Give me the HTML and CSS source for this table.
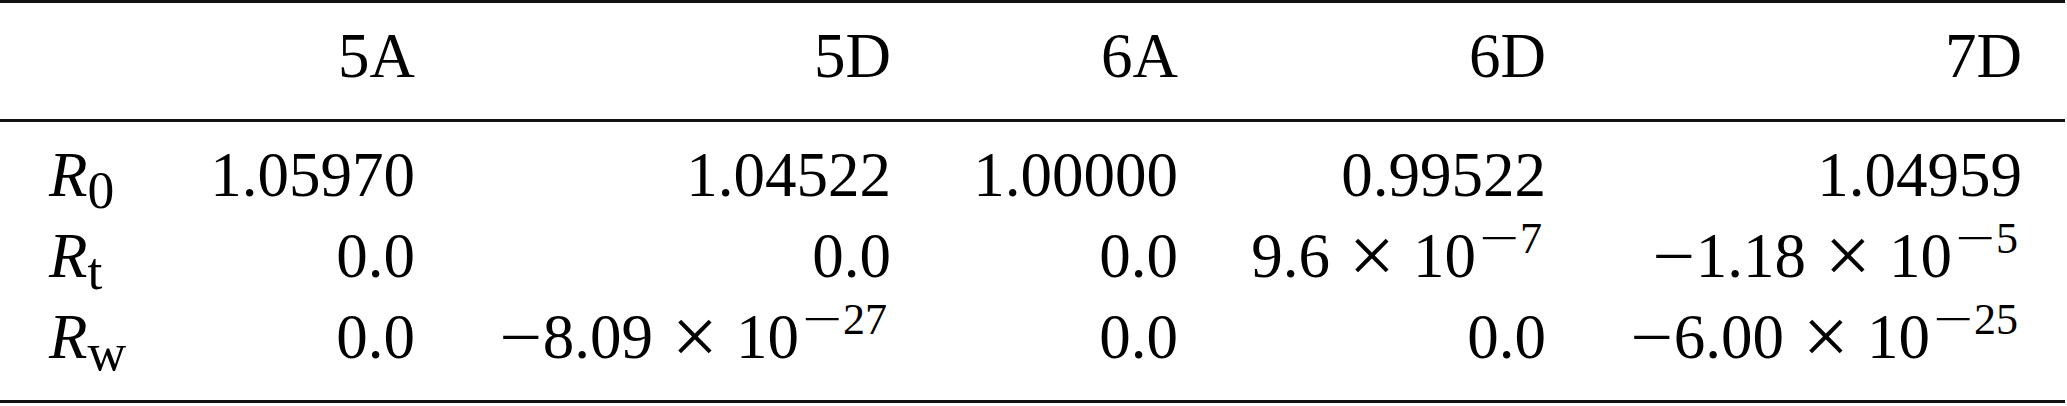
FILE: index.html
```html
<!DOCTYPE html>
<html lang="en">
<head>
  <meta charset="UTF-8" />
  <title>R values per configuration</title>
  <link rel="stylesheet" href="styles.css">
</head>
<body>
  <table class="tabla">
    <colgroup>
      <col class="c-label">
      <col class="c-5a">
      <col class="c-5d">
      <col class="c-6a">
      <col class="c-6d">
      <col class="c-7d">
    </colgroup>
    <thead>
      <tr>
        <th class="label"></th>
        <th>5A</th>
        <th>5D</th>
        <th>6A</th>
        <th>6D</th>
        <th class="last">7D</th>
      </tr>
    </thead>
    <tbody>
      <tr>
        <td class="label"><i>R</i><sub>0</sub></td>
        <td>1.05970</td>
        <td>1.04522</td>
        <td>1.00000</td>
        <td>0.99522</td>
        <td class="last">1.04959</td>
      </tr>
      <tr>
        <td class="label"><i>R</i><sub>t</sub></td>
        <td>0.0</td>
        <td>0.0</td>
        <td>0.0</td>
        <td>9.6 <span class="times">×</span> 10<sup><span class="neg">−</span>7</sup></td>
        <td class="last"><span class="neg">−</span>1.18 <span class="times">×</span> 10<sup><span class="neg">−</span>5</sup></td>
      </tr>
      <tr>
        <td class="label"><i>R</i><sub>w</sub></td>
        <td>0.0</td>
        <td><span class="neg">−</span>8.09 <span class="times">×</span> 10<sup><span class="neg">−</span>27</sup></td>
        <td>0.0</td>
        <td>0.0</td>
        <td class="last"><span class="neg">−</span>6.00 <span class="times">×</span> 10<sup><span class="neg">−</span>25</sup></td>
      </tr>
    </tbody>
  </table>
</body>
</html>
```

FILE: styles.css
```css
* { margin: 0; padding: 0; box-sizing: border-box; }

body {
  background: #fff;
  color: #000;
  font-family: 'Liberation Serif', 'Times New Roman', serif;
}

.tabla {
  width: 2065px;
  table-layout: fixed;
  border-collapse: separate;
  border-spacing: 0;
  font-size: 63px;
}

.c-label { width: 180px; }
.c-5a { width: 235px; }
.c-5d { width: 476px; }
.c-6a { width: 287px; }
.c-6d { width: 368px; }
.c-7d { width: 519px; }

th, td {
  font-weight: normal;
  text-align: right;
  white-space: nowrap;
}

th {
  border-top: 3px solid #111;
  border-bottom: 3px solid #111;
  padding-top: 18px;
  padding-bottom: 28px;
  line-height: 70px;
}

td {
  line-height: 81px;
}

tbody tr:first-child td { padding-top: 13px; }

tbody tr:last-child td {
  padding-bottom: 22px;
  border-bottom: 3px solid #111;
}

.label {
  text-align: left;
  padding-left: 49px;
}

.last { padding-right: 43px; }

sub {
  font-size: 0.85em;
  line-height: 0;
  vertical-align: -12px;
}

sup {
  font-size: 0.7em;
  line-height: 0;
  vertical-align: 24px;
  padding-left: 3px;
  padding-right: 4px;
}

/* math minus and times are wider than the text glyphs */
.neg {
  display: inline-block;
  transform: scaleX(1.2);
  margin: 0 4px 0 2px;
}

sup .neg {
  transform: scaleX(1.6);
  margin: 0 8px;
}

.times {
  display: inline-block;
  transform: scale(1.3);
  margin: 0 8px;
}
```
